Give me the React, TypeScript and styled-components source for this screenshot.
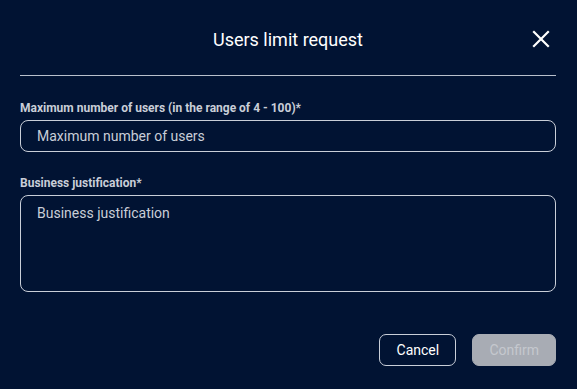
import React from 'react'
import styled, { createGlobalStyle } from 'styled-components'

const GlobalStyle = createGlobalStyle`
  html, body {
    margin: 0;
    padding: 0;
    background: #011333;
    font-family: Roboto, "Noto Sans", sans-serif;
  }
  * { box-sizing: border-box; }
`

const App = () => {
  return (
    <>
      <GlobalStyle />
      <Modal>
        <Header>
          <Title>Users limit request</Title>
          <CloseButton aria-label="Close">
            <svg width="18" height="18" viewBox="0 0 18 18">
              <path d="M2 2 L16 16 M16 2 L2 16" stroke="#ffffff" strokeWidth="2.2" strokeLinecap="square" />
            </svg>
          </CloseButton>
        </Header>
        <Divider />
        <Field>
          <Label>Maximum number of users (in the range of 4 - 100)*</Label>
          <Input placeholder="Maximum number of users" />
        </Field>
        <Field>
          <Label>Business justification*</Label>
          <TextArea placeholder="Business justification" />
        </Field>
        <Footer>
          <Button>Cancel</Button>
          <Button primary disabled>Confirm</Button>
        </Footer>
      </Modal>
    </>
  )
}

export default App

const Modal = styled.div`
  width: 577px;
  height: 389px;
  padding: 0 21px 0 20px;
  display: flex;
  flex-direction: column;
`

const Header = styled.div`
  position: relative;
  height: 75px;
  display: flex;
  align-items: center;
  justify-content: center;
  padding-top: 3px;
`

const Title = styled.h2`
  margin: 0;
  font-size: 18px;
  font-weight: 400;
  color: #ffffff;
`

const CloseButton = styled.button`
  position: absolute;
  right: 6px;
  top: 30px;
  background: none;
  border: none;
  padding: 0;
  cursor: pointer;
  display: flex;
`

const Divider = styled.div`
  height: 1px;
  background: #b9c0cc;
  margin-bottom: 25px;
`

const Field = styled.div`
  display: flex;
  flex-direction: column;
  gap: 5px;
  margin-bottom: 24px;
`

const Label = styled.label`
  font-size: 12px;
  font-weight: 700;
  color: #c9ced8;
  line-height: 14px;
`

const Input = styled.input`
  height: 32px;
  border: 1px solid #c9ced8;
  border-radius: 8px;
  background: transparent;
  padding: 0 16px;
  font-family: Roboto, sans-serif;
  font-size: 14px;
  color: #ffffff;
  outline: none;
  &::placeholder { color: #c9ced8; }
`

const TextArea = styled.textarea`
  height: 97px;
  border: 1px solid #c9ced8;
  border-radius: 8px;
  background: transparent;
  padding: 9px 16px;
  font-family: Roboto, sans-serif;
  font-size: 14px;
  color: #ffffff;
  outline: none;
  resize: none;
  &::placeholder { color: #c9ced8; }
`

const Footer = styled.div`
  display: flex;
  justify-content: flex-end;
  gap: 16px;
  margin-top: 18px;
`

const Button = styled.button<{ primary?: boolean }>`
  height: 32px;
  min-width: 77px;
  padding: 0 16px;
  border-radius: 7px;
  font-family: Roboto, sans-serif;
  font-size: 14px;
  font-weight: 400;
  border: 1px solid ${p => (p.primary ? '#a8acb4' : '#c9ced8')};
  background: ${p => (p.primary ? '#a8acb4' : 'transparent')};
  color: ${p => (p.primary ? '#c5c8ce' : '#ffffff')};
  cursor: ${p => (p.primary ? 'default' : 'pointer')};
`
